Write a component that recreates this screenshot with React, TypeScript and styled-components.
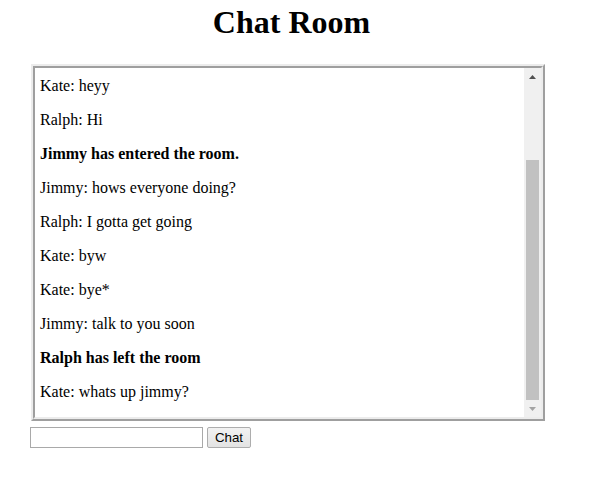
import React, { useLayoutEffect, useRef, useState } from "react";
import styled, { createGlobalStyle } from "styled-components";

const GlobalStyle = createGlobalStyle`
  html, body { background: #ffffff; }
  body {
    margin: 4px 8px;
    font-family: "Liberation Serif", "Times New Roman", serif;
    color: #000000;
  }
`;

const Page = styled.div`
  width: 567px;
`;

const Title = styled.h1`
  margin: 0;
  text-align: center;
  font-family: "Liberation Serif", "Times New Roman", serif;
  font-size: 32px;
  font-weight: bold;
  line-height: 37px;
`;

const Frame = styled.div`
  margin: 23px 0 0 23px;
  width: 510px;
  border: 2px solid;
  border-color: #ececec #9f9f9f #9f9f9f #ececec;
`;

const Inner = styled.div`
  display: flex;
  height: 349px;
  border: 2px solid;
  border-color: #9f9f9f #ececec #ececec #9f9f9f;
  background: #ffffff;
`;

const Viewport = styled.div`
  flex: 1;
  min-width: 0;
  overflow: hidden;
  padding: 0 5px;
`;

const ScrollBar = styled.div`
  width: 17px;
  flex: none;
  display: flex;
  flex-direction: column;
  background: #f0f0f0;
`;

const ArrowButton = styled.div`
  height: 17px;
  flex: none;
  display: flex;
  align-items: center;
  justify-content: center;
`;

const Track = styled.div`
  flex: 1;
  display: flex;
  flex-direction: column;
  padding: 0 2px;
`;

const Thumb = styled.div`
  flex: none;
  background: #c1c1c1;
`;

const Message = styled.p<{ $event?: boolean }>`
  margin: 16px 0;
  font-size: 16px;
  font-weight: ${(p) => (p.$event ? "bold" : "normal")};
`;

const InputRow = styled.form`
  margin: 6px 0 0 22px;
  display: flex;
  align-items: center;
  gap: 4px;
`;

const TextField = styled.input`
  box-sizing: border-box;
  width: 173px;
  height: 21px;
  margin: 0;
  padding: 1px 2px;
  border: 1px solid #a9a9a9;
  font-family: "Liberation Sans", Arial, sans-serif;
  font-size: 13.33px;
  outline: none;
`;

const ChatButton = styled.button`
  box-sizing: border-box;
  width: 44px;
  height: 21px;
  margin: 0;
  padding: 0;
  border: 1px solid #adadad;
  border-radius: 2px;
  background: linear-gradient(#f2f2f2, #e3e3e3);
  font-family: "Liberation Sans", Arial, sans-serif;
  font-size: 13.33px;
  color: #000000;
`;

const messages: { text: string; event?: boolean }[] = [
  { text: "Kate has entered the room.", event: true },
  { text: "Ralph has entered the room.", event: true },
  { text: "Ralph: hey kate" },
  { text: "Kate: heyy" },
  { text: "Ralph: Hi" },
  { text: "Jimmy has entered the room.", event: true },
  { text: "Jimmy: hows everyone doing?" },
  { text: "Ralph: I gotta get going" },
  { text: "Kate: byw" },
  { text: "Kate: bye*" },
  { text: "Jimmy: talk to you soon" },
  { text: "Ralph has left the room", event: true },
  { text: "Kate: whats up jimmy?" },
];

const TRACK = 349 - 34;

const Arrow = ({ dir, color }: { dir: "up" | "down"; color: string }) => (
  <svg width="7" height="4" viewBox="0 0 7 4">
    <polygon
      points={dir === "up" ? "3.5,0 7,4 0,4" : "0,0 7,0 3.5,4"}
      fill={color}
    />
  </svg>
);

export default function App() {
  const viewRef = useRef<HTMLDivElement>(null);
  const [thumb, setThumb] = useState({ top: 75, height: 240 });

  useLayoutEffect(() => {
    const el = viewRef.current;
    if (!el) return;
    el.scrollTop = el.scrollHeight;
    const total = el.scrollHeight;
    setThumb({
      top: Math.round((TRACK * el.scrollTop) / total),
      height: Math.round((TRACK * el.clientHeight) / total),
    });
  }, []);

  return (
    <Page>
      <GlobalStyle />
      <Title>Chat Room</Title>
      <Frame>
        <Inner>
          <Viewport ref={viewRef}>
            {messages.map((m, i) => (
              <Message key={i} $event={m.event}>
                {m.text}
              </Message>
            ))}
          </Viewport>
          <ScrollBar>
            <ArrowButton>
              <Arrow dir="up" color="#505050" />
            </ArrowButton>
            <Track>
              <Thumb style={{ marginTop: thumb.top, height: thumb.height }} />
            </Track>
            <ArrowButton>
              <Arrow dir="down" color="#a3a3a3" />
            </ArrowButton>
          </ScrollBar>
        </Inner>
      </Frame>
      <InputRow onSubmit={(e) => e.preventDefault()}>
        <TextField type="text" />
        <ChatButton type="submit">Chat</ChatButton>
      </InputRow>
    </Page>
  );
}
